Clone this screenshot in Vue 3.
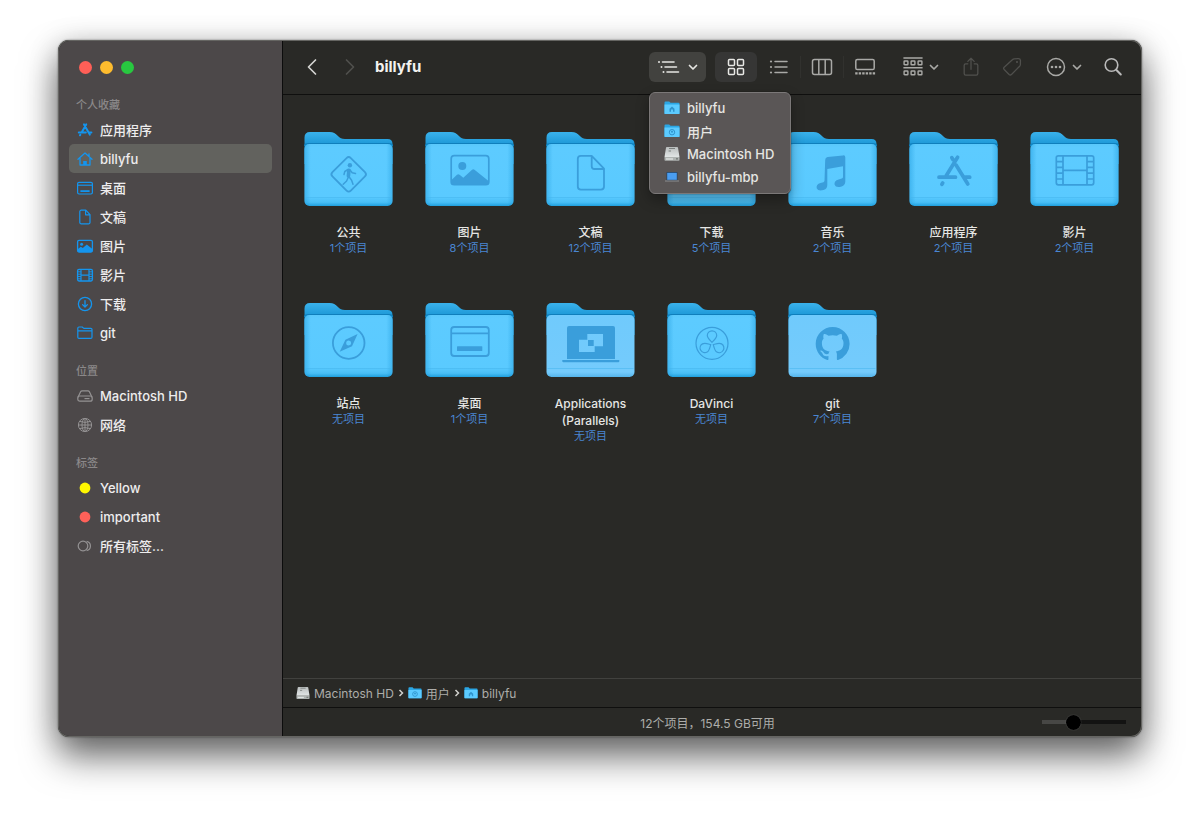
<script setup>
import { ref } from 'vue'

const sections = [
  {
    title: '个人收藏',
    items: [
      { label: '应用程序', icon: 's-apps' },
      { label: 'billyfu', icon: 's-home', active: true },
      { label: '桌面', icon: 's-desktop' },
      { label: '文稿', icon: 's-doc' },
      { label: '图片', icon: 's-picture' },
      { label: '影片', icon: 's-film' },
      { label: '下载', icon: 's-download' },
      { label: 'git', icon: 's-folder' }
    ]
  },
  {
    title: '位置',
    items: [
      { label: 'Macintosh HD', icon: 's-disk', muted: true },
      { label: '网络', icon: 's-globe', muted: true }
    ]
  },
  {
    title: '标签',
    items: [
      { label: 'Yellow', icon: 's-dot', tone: 'yellow' },
      { label: 'important', icon: 's-dot', tone: 'red' },
      { label: '所有标签...', icon: 's-tags', muted: true }
    ]
  }
]

const folders = [
  { name: '公共', count: '1个项目', glyph: 'f-public' },
  { name: '图片', count: '8个项目', glyph: 'f-picture' },
  { name: '文稿', count: '12个项目', glyph: 'f-doc' },
  { name: '下载', count: '5个项目', glyph: 'f-download' },
  { name: '音乐', count: '2个项目', glyph: 'f-music' },
  { name: '应用程序', count: '2个项目', glyph: 'f-apps' },
  { name: '影片', count: '2个项目', glyph: 'f-film' },
  { name: '站点', count: '无项目', glyph: 'f-compass' },
  { name: '桌面', count: '1个项目', glyph: 'f-desktop' },
  { name: 'Applications (Parallels)', count: '无项目', glyph: 'f-parallels', pale: true },
  { name: 'DaVinci', count: '无项目', glyph: 'f-davinci' },
  { name: 'git', count: '7个项目', glyph: 'f-git', pale: true }
]

const menu = [
  { label: 'billyfu', icon: 'm-home' },
  { label: '用户', icon: 'm-users' },
  { label: 'Macintosh HD', icon: 'm-disk' },
  { label: 'billyfu-mbp', icon: 'm-laptop' }
]

const crumbs = [
  { label: 'Macintosh HD', icon: 'm-disk' },
  { label: '用户', icon: 'm-users' },
  { label: 'billyfu', icon: 'm-home' }
]

const views = [
  { label: '图标', icon: 't-grid', active: true },
  { label: '列表', icon: 't-list' },
  { label: '分栏', icon: 't-columns' },
  { label: '画廊', icon: 't-gallery' }
]

const zoom = ref(35)
</script>

<template>
  <svg class="defs" width="0" height="0" aria-hidden="true">
    <defs>
      <linearGradient id="back" x1="0" y1="0" x2="0" y2="1">
        <stop offset="0" stop-color="#3ab2ec" />
        <stop offset="0.4" stop-color="#1c97d6" />
      </linearGradient>
      <linearGradient id="front" x1="0" y1="0" x2="0" y2="1">
        <stop offset="0" stop-color="#5ac8fb" />
        <stop offset="0.06" stop-color="#5dcbff" />
        <stop offset="0.85" stop-color="#5acaff" />
        <stop offset="0.94" stop-color="#48bef6" />
        <stop offset="1" stop-color="#1f9fdd" />
      </linearGradient>
      <linearGradient id="front-pale" x1="0" y1="0" x2="0" y2="1">
        <stop offset="0" stop-color="#70cafc" />
        <stop offset="0.92" stop-color="#74cbfc" />
        <stop offset="1" stop-color="#55b4ea" />
      </linearGradient>
      <linearGradient id="sides" x1="0" y1="0" x2="1" y2="0">
        <stop offset="0" stop-color="#1795d8" stop-opacity="0.4" />
        <stop offset="0.07" stop-color="#1795d8" stop-opacity="0" />
        <stop offset="0.93" stop-color="#1795d8" stop-opacity="0" />
        <stop offset="1" stop-color="#1795d8" stop-opacity="0.4" />
      </linearGradient>
      <linearGradient id="metal" x1="0" y1="0" x2="0" y2="1">
        <stop offset="0" stop-color="#b9bdbd" />
        <stop offset="1" stop-color="#e2e6e6" />
      </linearGradient>
    </defs>

    <!-- sidebar -->
    <symbol id="s-apps" viewBox="0 0 18 18">
      <g fill="none" stroke="currentColor" stroke-width="2" stroke-linecap="round">
        <path d="M10.2 3.4 5.6 11.4M8 3.4 13.8 13.6M2.8 11.4h7M13 11.4h2.4M4.3 13.8l-.3.5" />
      </g>
    </symbol>
    <symbol id="s-home" viewBox="0 0 18 18">
      <path d="M2 9.2 9 3l7 6.2M4 8v7h10V8M13 6.2V3.8" fill="none" stroke="currentColor" stroke-width="1.3" stroke-linecap="round" stroke-linejoin="round" />
      <path d="M7.2 15v-4h3.6v4z" fill="currentColor" />
    </symbol>
    <symbol id="s-desktop" viewBox="0 0 18 18">
      <g fill="none" stroke="currentColor" stroke-width="1.2">
        <rect x="1.6" y="3.4" width="14.8" height="11.6" rx="1.4" />
        <path d="M1.6 6.2h14.8" />
      </g>
      <path d="M4.4 11.2h9.2v1.8H4.4z" fill="currentColor" />
    </symbol>
    <symbol id="s-doc" viewBox="0 0 18 18">
      <path d="M5.2 2.2h4.6l4.2 4.4v7.8a1.4 1.4 0 0 1-1.4 1.4H5.2a1.4 1.4 0 0 1-1.4-1.4V3.600a1.4 1.4 0 0 1 1.400-1.400zM9.600 2.400v4.400h4.200" fill="none" stroke="currentColor" stroke-width="1.200" stroke-linejoin="round" />
    </symbol>
    <symbol id="s-picture" viewBox="0 0 18 18">
      <rect x="1.600" y="3.400" width="14.800" height="11.600" rx="1.400" fill="none" stroke="currentColor" stroke-width="1.300" />
      <circle cx="5.600" cy="7.200" r="1.500" fill="currentColor" />
      <path d="M1.600 12.200 4.800 9.800l2 1.200 4-3.400 5.600 4.400v2.200q0 .8-.8.8H2.400q-.8 0-.8-.8z" fill="currentColor" />
    </symbol>
    <symbol id="s-film" viewBox="0 0 18 18">
      <g fill="none" stroke="currentColor">
        <rect x="1.600" y="3.400" width="14.800" height="11.600" rx="1.400" stroke-width="1.300" />
        <path d="M5 3.400V15M13 3.400V15M5 9.200h8" stroke-width="1.200" />
        <path d="M1.600 5.800H5M1.600 8.200H5M1.600 10.500H5M1.600 12.800H5M13 5.800h3.400M13 8.200h3.400M13 10.500h3.400M13 12.800h3.400" stroke-width="0.900" />
      </g>
    </symbol>
    <symbol id="s-download" viewBox="0 0 18 18">
      <g fill="none" stroke="currentColor" stroke-width="1.300" stroke-linecap="round" stroke-linejoin="round">
        <circle cx="9" cy="9" r="6.600" />
        <path d="M9 5.600v6.200M6.600 9.600 9 12l2.400-2.400" />
      </g>
    </symbol>
    <symbol id="s-folder" viewBox="0 0 18 18">
      <path d="M1.800 13.200V4.200q0-1.200 1.200-1.200h3.200l1.600 1.400h7q1.200 0 1.200 1.200v7.600q0 1.200-1.200 1.200H3q-1.200 0-1.200-1.200zM1.800 6.800H16" fill="none" stroke="currentColor" stroke-width="1.200" stroke-linejoin="round" />
    </symbol>
    <symbol id="s-disk" viewBox="0 0 18 18">
      <g fill="none" stroke="currentColor" stroke-width="1.200" stroke-linejoin="round">
        <path d="M2 10.200 4.600 4.800q.5-1 1.500-1h5.800q1 0 1.500 1L16 10.200" />
        <rect x="1.800" y="9" width="14.400" height="5.200" rx="2" />
        <path d="M8.500 11.600h5" />
      </g>
    </symbol>
    <symbol id="s-globe" viewBox="0 0 18 18">
      <g fill="none" stroke="currentColor" stroke-width="1">
        <circle cx="9" cy="9" r="6.600" />
        <ellipse cx="9" cy="9" rx="3" ry="6.600" />
        <path d="M9 2.400v13.200M2.400 9h13.200M3.600 5.400q5.400 2 10.800 0M3.600 12.600q5.400-2 10.800 0" />
      </g>
    </symbol>
    <symbol id="s-dot" viewBox="0 0 18 18">
      <circle cx="9" cy="9" r="5.400" fill="currentColor" />
    </symbol>
    <symbol id="s-tags" viewBox="0 0 18 18">
      <g fill="none" stroke="currentColor" stroke-width="1.200">
        <circle cx="7" cy="9" r="4.800" />
        <path d="M10.600 4.300a4.800 4.800 0 0 1 0 9.400" />
      </g>
    </symbol>

    <!-- toolbar -->
    <symbol id="t-back" viewBox="0 0 18 18">
      <path d="M12.500 2 5.500 9l7 7" fill="none" stroke="currentColor" stroke-width="1.700" stroke-linecap="round" stroke-linejoin="round" />
    </symbol>
    <symbol id="t-forward" viewBox="0 0 18 18">
      <path d="m5.500 2 7 7-7 7" fill="none" stroke="currentColor" stroke-width="1.700" stroke-linecap="round" stroke-linejoin="round" />
    </symbol>
    <symbol id="t-chevron" viewBox="0 0 10 10">
      <path d="m1.500 3.500 3.500 3.500 3.500-3.500" fill="none" stroke="currentColor" stroke-width="1.700" stroke-linecap="round" stroke-linejoin="round" />
    </symbol>
    <symbol id="t-path" viewBox="0 0 22 22">
      <path d="M4.500 6h11.500M7 11h11.500M9 16h11.500" stroke="currentColor" stroke-width="1.600" stroke-linecap="round" />
      <g fill="currentColor">
        <circle cx="1" cy="6" r="1" /><circle cx="3.500" cy="11" r="1" /><circle cx="5.500" cy="16" r="1" />
      </g>
    </symbol>
    <symbol id="t-grid" viewBox="0 0 22 22">
      <g fill="none" stroke="currentColor" stroke-width="1.500">
        <rect x="3.500" y="3.500" width="6" height="6" rx="1" />
        <rect x="12.500" y="3.500" width="6" height="6" rx="1" />
        <rect x="3.500" y="12.500" width="6" height="6" rx="1" />
        <rect x="12.500" y="12.500" width="6" height="6" rx="1" />
      </g>
    </symbol>
    <symbol id="t-list" viewBox="0 0 22 22">
      <path d="M7 5.500h12M7 11h12M7 16.500h12" stroke="currentColor" stroke-width="1.500" stroke-linecap="round" />
      <g fill="currentColor">
        <circle cx="3" cy="5.500" r="1.100" /><circle cx="3" cy="11" r="1.100" /><circle cx="3" cy="16.500" r="1.100" />
      </g>
    </symbol>
    <symbol id="t-columns" viewBox="0 0 22 22">
      <g fill="none" stroke="currentColor" stroke-width="1.500">
        <rect x="1.500" y="3.500" width="19" height="15" rx="2" />
        <path d="M7.800 3.500v15M14.200 3.500v15" />
      </g>
    </symbol>
    <symbol id="t-gallery" viewBox="0 0 22 22">
      <rect x="1.800" y="3.500" width="18.400" height="10" rx="1.600" fill="none" stroke="currentColor" stroke-width="1.500" />
      <path d="M1.200 17.400h20" stroke="currentColor" stroke-width="2.400" stroke-dasharray="2.400 1.100" />
    </symbol>
    <symbol id="t-group" viewBox="0 0 22 22">
      <g fill="none" stroke="currentColor" stroke-width="1.400">
        <path d="M1.400 2h19.200M1.400 11.800h19.200" />
        <rect x="2.100" y="5" width="3.800" height="3.800" rx="0.600" />
        <rect x="9.100" y="5" width="3.800" height="3.800" rx="0.600" />
        <rect x="16.100" y="5" width="3.800" height="3.800" rx="0.600" />
        <rect x="2.100" y="15" width="3.800" height="3.800" rx="0.600" />
        <rect x="9.100" y="15" width="3.800" height="3.800" rx="0.600" />
        <rect x="16.100" y="15" width="3.800" height="3.800" rx="0.600" />
      </g>
    </symbol>
    <symbol id="t-share" viewBox="0 0 22 22">
      <path d="M7.500 7.500H5.200q-1.700 0-1.700 1.700v9q0 1.700 1.700 1.700h11.600q1.700 0 1.700-1.700v-9q0-1.700-1.700-1.700h-2.300M11 13.500V1.500M7.500 4.800 11 1.300l3.500 3.500" fill="none" stroke="currentColor" stroke-width="1.400" stroke-linecap="round" stroke-linejoin="round" />
    </symbol>
    <symbol id="t-tag" viewBox="0 0 22 22">
      <path d="M11.700 2.800q.7-.7 1.700-.8l4.700-.3q2 0 2.200 2l-.1 4.800q-.1 1-.8 1.700l-9 9q-1.300 1.200-2.600 0L2.400 13.800q-1.200-1.300 0-2.600z" fill="none" stroke="currentColor" stroke-width="1.400" stroke-linejoin="round" />
      <circle cx="16.500" cy="5.500" r="1.200" fill="currentColor" />
    </symbol>
    <symbol id="t-more" viewBox="0 0 22 22">
      <circle cx="11" cy="11" r="8.500" fill="none" stroke="currentColor" stroke-width="1.500" />
      <g fill="currentColor">
        <circle cx="7" cy="11" r="1.300" /><circle cx="11" cy="11" r="1.300" /><circle cx="15" cy="11" r="1.300" />
      </g>
    </symbol>
    <symbol id="t-search" viewBox="0 0 22 22">
      <g fill="none" stroke="currentColor" stroke-linecap="round">
        <circle cx="9.500" cy="9" r="6.300" stroke-width="1.600" />
        <path d="m14.200 13.800 4.600 4.700" stroke-width="2" />
      </g>
    </symbol>

    <!-- small places -->
    <symbol id="m-home" viewBox="0 0 16 16">
      <path d="M.5 2.500q0-1 1-1h3.700l1.300 1.300h8q1 0 1 1V14H.5z" fill="#2ba6e4" />
      <path d="M.5 4.600h15v8.600q0 .8-.8.800H1.300q-.8 0-.8-.8z" fill="#5ccbff" />
      <path d="M5.500 11.800V8.800L8 6.600l2.500 2.200v3H9V9.600H7v2.200z" fill="#2f93cc" />
    </symbol>
    <symbol id="m-users" viewBox="0 0 16 16">
      <path d="M.5 2.500q0-1 1-1h3.700l1.300 1.300h8q1 0 1 1V14H.5z" fill="#2ba6e4" />
      <path d="M.5 4.600h15v8.600q0 .8-.8.800H1.300q-.8 0-.8-.8z" fill="#5ccbff" />
      <circle cx="8" cy="9.200" r="2.700" fill="none" stroke="#2f93cc" />
      <circle cx="8" cy="8.700" r="1" fill="#2f93cc" />
    </symbol>
    <symbol id="m-disk" viewBox="0 0 16 16">
      <path d="M2.800 1h10.400q.7 0 .8.700L15.500 11H.5L2 1.700q.1-.7.800-.7z" fill="url(#metal)" />
      <path d="M.5 11h15v3q0 .8-.8.800H1.300q-.8 0-.8-.8z" fill="#aeb3b1" />
      <path d="M5 2.500h6M4.600 5h2.400" stroke="#7b807e" />
      <path d="M2 13h7" stroke="#eef1f0" />
      <path d="M12 12.900h2" stroke="#5f6462" />
    </symbol>
    <symbol id="m-laptop" viewBox="0 0 16 16">
      <rect x="2.500" y="3" width="11" height="8.500" rx="0.800" fill="#24405f" />
      <rect x="3.200" y="3.800" width="9.600" height="7" fill="#4a9df0" />
      <path d="M1 11.500h14v1H1z" fill="#8d8f90" />
    </symbol>

    <!-- folder emblems -->
    <symbol id="f-public" viewBox="0 0 89 76">
      <rect x="31.700" y="30.300" width="26" height="26" rx="3" transform="rotate(45 44.700 43.300)" fill="none" stroke="currentColor" stroke-width="1.800" />
      <circle cx="45.900" cy="34.300" r="2.200" fill="currentColor" />
      <g fill="none" stroke="currentColor" stroke-linecap="round" stroke-linejoin="round">
        <path d="M44.900 39.200 44.400 45" stroke-width="3.600" />
        <path d="M44 38.500 40.800 40.500 40 43.500M46 39l2.200 2.800 3.300.8M44.200 46.500l-1.600 3.500-3.400 3.300M45.200 46l2.400 3.200 1.400 4" stroke-width="1.500" />
      </g>
    </symbol>
    <symbol id="f-picture" viewBox="0 0 89 76">
      <rect x="26.200" y="24.700" width="37.600" height="29" rx="3" fill="none" stroke="currentColor" stroke-width="1.700" />
      <circle cx="37.300" cy="35" r="4" fill="currentColor" />
      <path d="M26.500 49 32 43.800q1.300-1.100 2.600 0l3.700 3 8.500-7.800q1.500-1.300 3 0L63.500 50v1.700q0 2-2 2H28.500q-2 0-2-2z" fill="currentColor" />
    </symbol>
    <symbol id="f-doc" viewBox="0 0 89 76">
      <path d="M34.800 24.800h10.900L58 37.600v18q0 3-3 3H34.800q-3 0-3-3V27.800q0-3 3-3zM45.700 25v10.200q0 2.800 2.800 2.800H58" fill="none" stroke="currentColor" stroke-width="1.800" stroke-linejoin="round" />
    </symbol>
    <symbol id="f-download" viewBox="0 0 89 76">
      <g fill="none" stroke="currentColor" stroke-width="2" stroke-linecap="round" stroke-linejoin="round">
        <circle cx="44.700" cy="41" r="15.700" />
        <path d="M44.700 33v15M38.500 42.500l6.200 6.200 6.200-6.200" />
      </g>
    </symbol>
    <symbol id="f-music" viewBox="0 0 89 76">
      <path d="M37.200 29q0-2.400 2.400-2.900L55 24.400q2.300-.3 2.300 1.800V50.600q0 3.700-3.700 4.900-5.800 1.700-7-1.800-.8-4 4-5.300l3.200-.8q1.200-.4 1.200-1.600V35.300l-15.700 2.600v16.200q0 3.800-3.700 5-5.500 1.500-6.900-1.800-.8-4 3.800-5.300l2.900-.7q1.100-.4 1.100-1.700z" fill="currentColor" />
    </symbol>
    <symbol id="f-apps" viewBox="0 0 89 76">
      <g fill="none" stroke="currentColor" stroke-width="3.700" stroke-linecap="round">
        <path d="M48.600 26.300 37.200 44.800M42.800 26.600l1.100 1.900M47.200 34.300 58.800 53M30 46.200h16.500M56.500 46.200h4.200M33.700 52l-.8 1.300" />
      </g>
    </symbol>
    <symbol id="f-film" viewBox="0 0 89 76">
      <g fill="none" stroke="currentColor" stroke-width="1.700">
        <rect x="26.300" y="24.800" width="37.400" height="29" rx="2" />
        <path d="M33 25v29M57 25v29M33 39.300h24M26.500 30.600H33M26.500 36.400H33M26.500 42.200H33M26.500 48H33M57 30.600h6.500M57 36.400h6.500M57 42.200h6.500M57 48h6.500" />
      </g>
    </symbol>
    <symbol id="f-compass" viewBox="0 0 89 76">
      <circle cx="44.700" cy="41" r="15.800" fill="none" stroke="currentColor" stroke-width="1.800" />
      <path fill-rule="evenodd" d="M53.600 32 48 44.200 35.700 49.800 41.400 37.700zM44.700 38.500a2.500 2.500 0 1 0 0 5 2.500 2.500 0 0 0 0-5z" fill="currentColor" />
    </symbol>
    <symbol id="f-desktop" viewBox="0 0 89 76">
      <g fill="none" stroke="currentColor" stroke-width="1.800">
        <rect x="26.200" y="25" width="37.600" height="29" rx="3" />
        <path d="M26.500 31.300h37" />
      </g>
      <rect x="32" y="44.200" width="25.300" height="4.800" rx="0.600" fill="currentColor" />
    </symbol>
    <symbol id="f-parallels" viewBox="0 0 89 76">
      <path fill-rule="evenodd" d="M23 24h44q2 0 2 2v31H21V26q0-2 2-2zM41.300 32v5.700H33V50h15.700v-5.700H57V32zM42 38h5.700v6H42z" fill="currentColor" />
      <path d="M16.300 58h57v1.200q0 1-1 1h-55q-1 0-1-1z" fill="currentColor" />
    </symbol>
    <symbol id="f-davinci" viewBox="0 0 89 76">
      <g fill="none" stroke="currentColor" stroke-width="1.200">
        <circle cx="45" cy="41.300" r="16" />
        <path id="petal" d="M45 40.300C42.500 37.800 40.300 36 40.300 33.500a4.700 4.700 0 0 1 9.400 0C49.700 36 47.500 37.800 45 40.300z" />
        <use href="#petal" transform="rotate(120 45 41.800)" />
        <use href="#petal" transform="rotate(240 45 41.800)" />
      </g>
    </symbol>
    <symbol id="f-git" viewBox="0 0 89 76">
      <path transform="translate(27.700 25) scale(2.120)" d="M8 0C3.580 0 0 3.580 0 8c0 3.540 2.290 6.530 5.470 7.590.4.070.55-.17.55-.38 0-.19-.01-.82-.01-1.490-2.010.37-2.530-.49-2.690-.94-.09-.23-.48-.94-.82-1.130-.28-.15-.68-.52-.01-.53.63-.01 1.080.58 1.230.82.72 1.210 1.870.87 2.330.66.070-.52.280-.87.510-1.070-1.780-.2-3.640-.89-3.640-3.950 0-.87.310-1.590.820-2.150-.08-.2-.36-1.020.080-2.120 0 0 .67-.21 2.200.82.640-.18 1.320-.27 2-.27s1.360.09 2 .27c1.530-1.040 2.200-.82 2.200-.82.440 1.100.160 1.920.080 2.120.510.560.820 1.270.820 2.150 0 3.070-1.870 3.750-3.650 3.950.290.250.540.730.540 1.480 0 1.070-.01 1.930-.01 2.200 0 .21.150.460.550.380A8.010 8.010 0 0 0 16 8c0-4.420-3.580-8-8-8z" fill="currentColor" />
    </symbol>
  </svg>

  <div class="desktop">
    <div class="window">
      <aside class="sidebar">
        <div class="lights">
          <button class="light close" aria-label="关闭"></button>
          <button class="light minimize" aria-label="最小化"></button>
          <button class="light expand" aria-label="缩放"></button>
        </div>
        <nav>
          <section v-for="s in sections" :key="s.title" class="group">
            <h2>{{ s.title }}</h2>
            <ul>
              <li v-for="i in s.items" :key="i.label">
                <a href="#" class="place" :class="{ active: i.active }">
                  <svg class="place-icon" :class="[i.tone, { muted: i.muted }]" aria-hidden="true"><use :href="'#' + i.icon" /></svg>
                  <span>{{ i.label }}</span>
                </a>
              </li>
            </ul>
          </section>
        </nav>
      </aside>

      <main class="main">
        <header class="toolbar">
          <button class="tool arrow" aria-label="后退"><svg class="i18"><use href="#t-back" /></svg></button>
          <button class="tool arrow dim" aria-label="前进" disabled><svg class="i18"><use href="#t-forward" /></svg></button>
          <h1>billyfu</h1>

          <div class="path-picker">
            <button class="tool drop raised" aria-label="路径" aria-expanded="true">
              <svg class="i22"><use href="#t-path" /></svg>
              <svg class="i10"><use href="#t-chevron" /></svg>
            </button>
            <div class="menu" role="menu">
              <button v-for="m in menu" :key="m.label" class="menu-item" role="menuitem">
                <svg class="i16" aria-hidden="true"><use :href="'#' + m.icon" /></svg>
                <span>{{ m.label }}</span>
              </button>
            </div>
          </div>

          <div class="views">
            <button v-for="v in views" :key="v.icon" class="tool view" :class="{ chosen: v.active }" :aria-label="v.label">
              <svg class="i22"><use :href="'#' + v.icon" /></svg>
            </button>
          </div>

          <button class="tool drop" aria-label="分组">
            <svg class="i22"><use href="#t-group" /></svg>
            <svg class="i10"><use href="#t-chevron" /></svg>
          </button>
          <div class="pair">
            <button class="tool single dim" aria-label="共享" disabled><svg class="i20"><use href="#t-share" /></svg></button>
            <button class="tool single dim" aria-label="标签" disabled><svg class="i20"><use href="#t-tag" /></svg></button>
          </div>
          <button class="tool drop" aria-label="操作">
            <svg class="i22"><use href="#t-more" /></svg>
            <svg class="i10"><use href="#t-chevron" /></svg>
          </button>
          <button class="tool single search" aria-label="搜索"><svg class="i22"><use href="#t-search" /></svg></button>
        </header>

        <ul class="files">
          <li v-for="f in folders" :key="f.name" class="file">
            <svg class="folder" :class="{ pale: f.pale }" viewBox="0 0 89 76" aria-hidden="true">
              <path d="M.5 6.500Q.5 1 6 1h19.500c4 0 6 1.600 8.200 3.800C36 7 37.500 8 41 8h42.500q5 0 5 5v20H.5z" fill="url(#back)" />
              <path d="M.5 15q0-2.500 4-2.500h80q4 0 4 2.500" fill="none" stroke="#0f7fbc" stroke-width="1.200" />
              <rect x="0.500" y="13" width="88" height="62" rx="5" :fill="f.pale ? 'url(#front-pale)' : 'url(#front)'" />
              <rect v-if="!f.pale" x="0.500" y="13" width="88" height="62" rx="5" fill="url(#sides)" />
              <path d="M1.500 66.500h86" stroke="#43b4ec" stroke-opacity="0.500" />
              <use :href="'#' + f.glyph" />
            </svg>
            <span class="name">{{ f.name }}</span>
            <span class="count">{{ f.count }}</span>
          </li>
        </ul>

        <nav class="crumbs" aria-label="路径栏">
          <template v-for="(c, n) in crumbs" :key="c.label">
            <svg v-if="n" class="sep" viewBox="0 0 8 8" aria-hidden="true">
              <path d="m2.500 1 3 3-3 3" fill="none" stroke="currentColor" stroke-width="1.500" />
            </svg>
            <a href="#" class="crumb">
              <svg class="i14" aria-hidden="true"><use :href="'#' + c.icon" /></svg>
              <span>{{ c.label }}</span>
            </a>
          </template>
        </nav>

        <footer class="status">
          <span class="summary">12个项目，154.5 GB可用</span>
          <input v-model="zoom" class="slider" type="range" min="0" max="100" aria-label="图标大小" />
        </footer>
      </main>
    </div>
  </div>
</template>

<style>
body {
  margin: 0;
  background: #fff;
}
</style>

<style scoped>
* {
  box-sizing: border-box;
}

button {
  border: 0;
  padding: 0;
  background: none;
  color: inherit;
  font: inherit;
}

a {
  color: inherit;
  text-decoration: none;
}

ul {
  list-style: none;
  margin: 0;
  padding: 0;
}

.defs {
  position: absolute;
}

.desktop {
  display: flex;
  min-height: 100vh;
  padding: 40px 58px 76px;
  font-family: Inter, "Noto Sans CJK SC", sans-serif;
  color: #e6e6e4;
}

.window {
  flex: 1;
  display: flex;
  min-width: 0;
  border-radius: 11px;
  background: #292926;
  box-shadow: inset 0 0 0 1px #656562, 0 0 2px rgba(0, 0, 0, 0.5), 0 20px 36px rgba(0, 0, 0, 0.55), 0 4px 30px rgba(0, 0, 0, 0.2);
}

.sidebar {
  flex: 0 0 224px;
  margin: 1px 0 1px 1px;
  padding: 20px 10px 0;
  border-right: 1px solid #0c0c0c;
  border-radius: 10px 0 0 10px;
  background: #4c4849;
}

.lights {
  display: flex;
  gap: 8px;
  padding-left: 10px;
  margin-bottom: 23px;
}

.light {
  width: 13px;
  height: 13px;
  border-radius: 50%;
}

.close {
  background: #ff5f57;
}

.minimize {
  background: #febc2e;
}

.expand {
  background: #28c840;
}

.group {
  margin-bottom: 16px;
}

h2 {
  margin: 0 0 2px;
  padding-left: 7px;
  font-size: 11px;
  font-weight: 500;
  line-height: 16px;
  color: #8b8889;
}

.place {
  display: flex;
  align-items: center;
  gap: 6px;
  height: 29px;
  padding-left: 7px;
  border-radius: 5px;
  font-size: 13px;
  font-weight: 500;
  color: #eeedee;
}

.place.active {
  background: #62625e;
}

.place-icon {
  width: 18px;
  height: 18px;
  color: #1495ee;
}

.place-icon.muted {
  color: #949293;
}

.place-icon.yellow {
  color: #fff700;
}

.place-icon.red {
  color: #ff6159;
}

.main {
  flex: 1;
  min-width: 0;
  display: flex;
  flex-direction: column;
  margin: 1px 1px 1px 0;
}

.toolbar {
  display: flex;
  align-items: center;
  height: 54px;
  padding: 0 8px 2px 14px;
  border-bottom: 1px solid #0f0f0e;
  color: #a9a9a6;
}

.tool {
  display: flex;
  align-items: center;
  justify-content: center;
  height: 30px;
  border-radius: 6px;
}

.arrow {
  width: 30px;
  margin-right: 8px;
  color: #d4d4d1;
}

h1 {
  margin: 0 0 0 2px;
  font-size: 15px;
  font-weight: 700;
  line-height: 20px;
  color: #f2f2f0;
}

.path-picker {
  position: relative;
  margin-left: auto;
  color: #e6e6e3;
}

.drop {
  gap: 5px;
  width: 50px;
}

.raised {
  gap: 8px;
  width: 57px;
  background: #42423f;
}

.dim {
  color: #50504d;
}

.views {
  display: flex;
  gap: 1px;
  margin: 0 9px;
}

.view {
  width: 42px;
}

.view + .view + .view {
  box-shadow: -1px 0 0 #31312e;
  border-radius: 0;
  height: 22px;
  align-self: center;
}

.chosen {
  background: #363635;
  color: #e8e8e5;
}

.pair {
  display: flex;
  margin: 0 6px 0 5px;
}

.single {
  width: 41px;
}

.search {
  margin-left: 4px;
  color: #bababa;
}

.i10 {
  width: 10px;
  height: 10px;
}

.i14 {
  width: 14px;
  height: 14px;
}

.i16 {
  width: 16px;
  height: 16px;
}

.i18 {
  width: 18px;
  height: 18px;
}

.i20 {
  width: 20px;
  height: 20px;
}

.i22 {
  width: 22px;
  height: 22px;
}

.menu {
  position: absolute;
  z-index: 2;
  top: 40px;
  left: 0;
  min-width: 142px;
  padding: 4px;
  border: 1px solid #7b7878;
  border-radius: 6px;
  background: #5a5656;
  box-shadow: 0 0 1px #000, 0 6px 14px rgba(0, 0, 0, 0.3);
}

.menu-item {
  display: flex;
  align-items: center;
  gap: 7px;
  width: 100%;
  height: 23px;
  padding: 0 10px;
  font-size: 13px;
  font-weight: 500;
  white-space: nowrap;
}

.files {
  flex: 1;
  display: grid;
  grid-template-columns: repeat(auto-fill, 121px);
  grid-auto-rows: 171px;
  padding: 36px 5px 0;
}

.file {
  display: flex;
  flex-direction: column;
  align-items: center;
  text-align: center;
}

.folder {
  width: 89px;
  height: 76px;
  margin-bottom: 17px;
  color: #3a9edb;
}

.name {
  max-width: 100px;
  font-size: 12px;
  font-weight: 500;
  line-height: 17px;
}

.count {
  font-size: 11px;
  line-height: 15px;
  color: #4a86d2;
}

.crumbs {
  display: flex;
  align-items: center;
  gap: 3px;
  height: 29px;
  padding: 0 13px;
  border-top: 1px solid #41413e;
  font-size: 12px;
  color: #adadaa;
}

.crumb {
  display: flex;
  align-items: center;
  gap: 4px;
}

.sep {
  width: 8px;
  height: 8px;
  color: #d0d0cd;
}

.status {
  display: grid;
  grid-template-columns: 1fr auto 1fr;
  align-items: center;
  height: 29px;
  padding: 0 15px 0 6px;
  border-top: 1px solid #0f0f0e;
  font-size: 12px;
  color: #adadaa;
}

.summary {
  grid-column: 2;
}

.slider {
  justify-self: end;
  width: 84px;
  height: 15px;
  margin: 0;
  appearance: none;
  background: linear-gradient(90deg, #474745 36%, #131312 36%) center / 100% 4px no-repeat;
}

.slider::-webkit-slider-thumb {
  appearance: none;
  width: 15px;
  height: 15px;
  border-radius: 50%;
  background: #000;
  box-shadow: 0 0 1px #777;
}
</style>
